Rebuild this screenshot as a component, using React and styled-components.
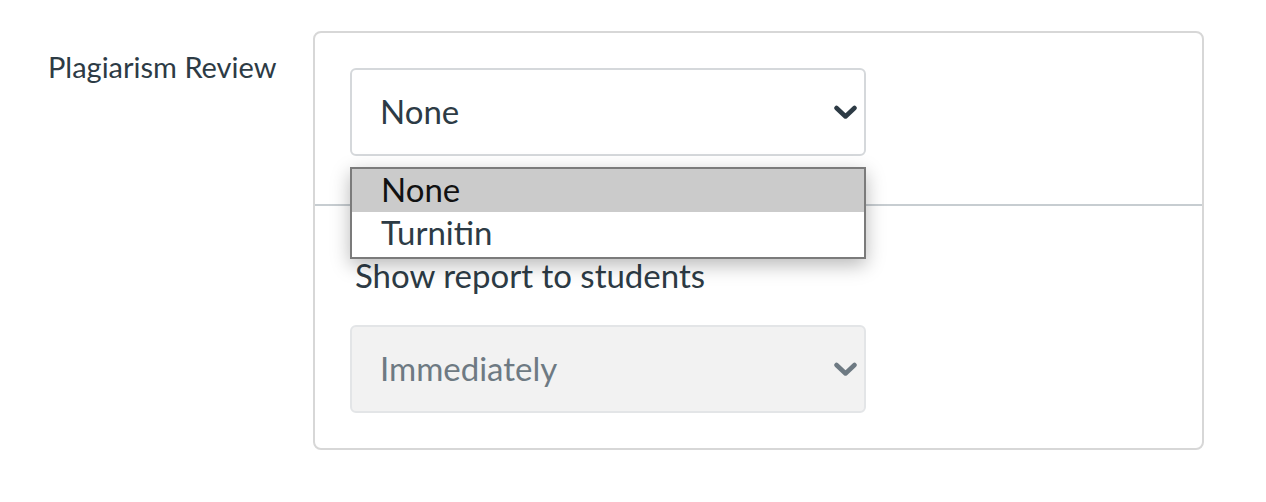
import React from "react";
import styled, { createGlobalStyle } from "styled-components";

const Global = createGlobalStyle`
  html, body { margin: 0; padding: 0; background: #ffffff; }
  body { font-family: Lato, "Open Sans", sans-serif; color: #2d3b45; }
`;

const Page = styled.div`
  display: flex;
  align-items: flex-start;
  padding: 31px 0 0 48px;
  width: 1266px;
  height: 502px;
  box-sizing: border-box;
`;

const RowLabel = styled.div`
  width: 265px;
  font-size: 29px;
  line-height: 34px;
  padding-top: 19px;
  color: #2d3b45;
`;

const Panel = styled.div`
  position: relative;
  width: 891px;
  height: 419px;
  box-sizing: border-box;
  border: 2px solid #d7d7d7;
  border-radius: 8px;
  display: flex;
  flex-direction: column;
`;

const TopSection = styled.div`
  padding: 35px 0 48px 35px;
  border-bottom: 2px solid #c7cdd1;
`;

const BottomSection = styled.div`
  padding: 52px 0 0 35px;
  display: flex;
  flex-direction: column;
`;

const FieldLabel = styled.div`
  font-size: 33px;
  line-height: 34px;
  padding-left: 5px;
  margin-bottom: 33px;
  color: #2d3b45;
`;

const SelectBox = styled.div`
  width: 516px;
  height: 88px;
  box-sizing: border-box;
  border: 2px solid ${(p) => (p.$disabled ? "#e3e5e7" : "#d5d8db")};
  border-radius: 6px;
  background: ${(p) => (p.$disabled ? "#f2f2f2" : "#ffffff")};
  display: flex;
  align-items: center;
  justify-content: space-between;
  padding: 0 6px 3px 28px;
  font-size: 33px;
  line-height: 40px;
  color: ${(p) => (p.$disabled ? "#6e7a83" : "#2d3b45")};
`;

const ChevronWrap = styled.span`
  display: flex;
  padding-top: 3px;
`;

const Chevron = ({ color }) => (
  <ChevronWrap>
    <svg width="25" height="15" viewBox="0 0 25 15">
      <polyline
        points="3.5,3 12.5,11.5 21.5,3"
        fill="none"
        stroke={color}
        strokeWidth="4.5"
        strokeLinecap="round"
        strokeLinejoin="round"
      />
    </svg>
  </ChevronWrap>
);

const OptionList = styled.div`
  position: absolute;
  left: 35px;
  top: 134px;
  width: 516px;
  box-sizing: border-box;
  border: 2px solid #7b7b7b;
  background: #ffffff;
  box-shadow: 0 6px 18px rgba(0, 0, 0, 0.28);
  padding: 0 0 2px 0;
`;

const Option = styled.div`
  height: 43px;
  line-height: 41px;
  padding-left: 29px;
  font-size: 33px;
  background: ${(p) => (p.$active ? "#cbcbcb" : "#ffffff")};
  color: ${(p) => (p.$active ? "#111111" : "#2d3b45")};
`;

export default function App() {
  return (
    <>
      <Global />
      <Page>
        <RowLabel>Plagiarism Review</RowLabel>
        <Panel>
          <TopSection>
            <SelectBox>
              <span>None</span>
              <Chevron color="#2d3b45" />
            </SelectBox>
          </TopSection>
          <BottomSection>
            <FieldLabel>Show report to students</FieldLabel>
            <SelectBox $disabled>
              <span>Immediately</span>
              <Chevron color="#6e7a83" />
            </SelectBox>
          </BottomSection>
          <OptionList>
            <Option $active>None</Option>
            <Option>Turnitin</Option>
          </OptionList>
        </Panel>
      </Page>
    </>
  );
}
